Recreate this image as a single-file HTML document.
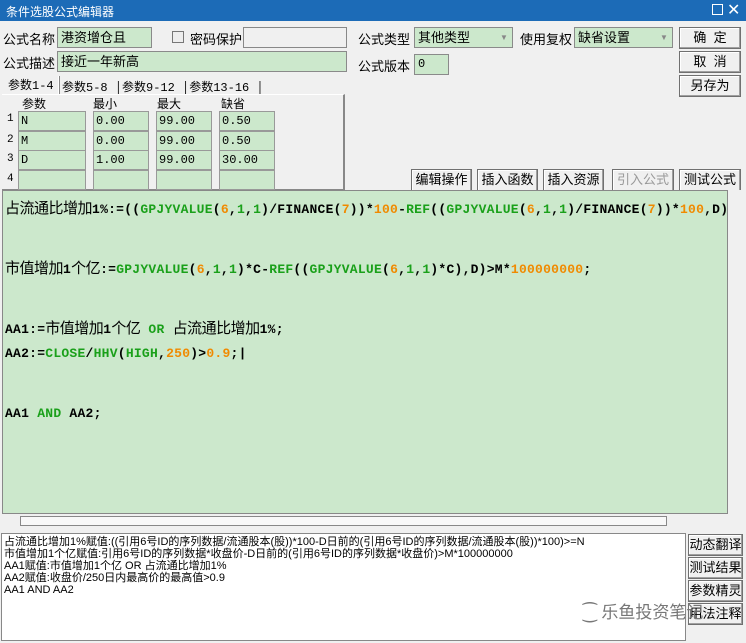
<!DOCTYPE html>
<html><head><meta charset="utf-8"><style>
*{margin:0;padding:0;box-sizing:border-box}
body{width:746px;height:643px;background:#f0f0f0;font-family:"Liberation Sans","Noto Sans CJK SC",sans-serif;font-size:13px;color:#000;position:relative;overflow:hidden}
.a{position:absolute;white-space:nowrap}
.t{position:absolute;top:0;left:0;width:746px;height:21px;background:#1c6bb7;color:#fff;font-size:12px;padding:3px 6px}
.in{position:absolute;background:#cce8cc;border:1px solid #8a8a8a;padding:1px 3px;font-size:13px;line-height:17px}
.btn{position:absolute;background:#f0f0f0;border:1px solid #707070;box-shadow:inset -1px -1px #a0a0a0,inset 1px 1px #fff;text-align:center;font-size:13px;line-height:20px}
.m{font-family:"Liberation Mono","Noto Sans CJK SC",monospace}
.code{position:absolute;left:2px;top:190px;width:726px;height:324px;background:#cce8cc;border:1px solid #888;overflow:hidden}
.code div{position:absolute;left:2px;font-family:"Liberation Mono","Noto Sans CJK SC",monospace;font-weight:bold;font-size:13px;white-space:nowrap;letter-spacing:0.25px}
.g{color:#1aa01a}.o{color:#f08a00}.c{font-weight:normal;font-size:15px;letter-spacing:-0.5px}
.cell{position:absolute;background:#cce8cc;border:1px solid #999;height:20px;font-family:"Liberation Mono",monospace;font-size:12px;padding:2px 2px}
</style></head><body>
<div class="t">条件选股公式编辑器</div>
<div class="a" style="left:712px;top:4px;width:11px;height:11px;border:1px solid #fff"></div>
<div class="a" style="left:727px;top:0;color:#fff;font-size:16px">✕</div>

<div class="a" style="left:3px;top:29px">公式名称</div>
<div class="in" style="left:57px;top:27px;width:95px;height:21px">港资增仓且</div>
<div class="a" style="left:172px;top:31px;width:12px;height:12px;border:1px solid #777;background:#eee"></div>
<div class="a" style="left:190px;top:29px">密码保护</div>
<div class="a" style="left:243px;top:27px;width:104px;height:21px;border:1px solid #888;background:#f0f0f0"></div>
<div class="a" style="left:3px;top:53px">公式描述</div>
<div class="in" style="left:57px;top:51px;width:290px;height:21px">接近一年新高</div>

<div class="a" style="left:358px;top:29px">公式类型</div>
<div class="in" style="left:414px;top:27px;width:99px;height:21px">其他类型</div>
<div class="a" style="left:496px;top:28px;width:16px;height:19px;color:#888;font-size:8px;padding-top:5px;text-align:center">▼</div>
<div class="a" style="left:520px;top:29px">使用复权</div>
<div class="in" style="left:574px;top:27px;width:99px;height:21px">缺省设置</div>
<div class="a" style="left:656px;top:28px;width:16px;height:19px;color:#888;font-size:8px;padding-top:5px;text-align:center">▼</div>
<div class="a" style="left:358px;top:56px">公式版本</div>
<div class="in m" style="left:414px;top:54px;width:35px;height:21px;font-size:12px">0</div>

<div class="btn" style="left:679px;top:27px;width:62px;height:22px">确 &nbsp;定</div>
<div class="btn" style="left:679px;top:51px;width:62px;height:22px">取 &nbsp;消</div>
<div class="btn" style="left:679px;top:75px;width:62px;height:22px">另存为</div>

<div class="a m" style="left:8px;top:76px;font-size:12px">参数1-4</div>
<div class="a" style="left:58px;top:76px;height:18px;border-left:1px solid #fff;border-right:1px solid #888"></div>
<div class="a m" style="left:62px;top:78px;font-size:12px">参数5-8 │参数9-12 │参数13-16 │</div>
<div class="a" style="left:2px;top:94px;width:343px;height:97px;border-right:2px solid #888;border-bottom:2px solid #888;border-top:1px solid #fff"></div>
<div class="a" style="left:22px;top:95px;font-size:12px">参数</div>
<div class="a" style="left:93px;top:95px;font-size:12px">最小</div>
<div class="a" style="left:157px;top:95px;font-size:12px">最大</div>
<div class="a" style="left:221px;top:95px;font-size:12px">缺省</div>
<div class="a m" style="left:7px;top:113px;font-size:11px">1</div>
<div class="a m" style="left:7px;top:134px;font-size:11px">2</div>
<div class="a m" style="left:7px;top:153px;font-size:11px">3</div>
<div class="a m" style="left:7px;top:173px;font-size:11px">4</div>
<div class="cell" style="left:18px;top:111px;width:68px">N</div><div class="cell" style="left:93px;top:111px;width:56px">0.00</div><div class="cell" style="left:156px;top:111px;width:56px">99.00</div><div class="cell" style="left:219px;top:111px;width:56px">0.50</div>
<div class="cell" style="left:18px;top:131px;width:68px">M</div><div class="cell" style="left:93px;top:131px;width:56px">0.00</div><div class="cell" style="left:156px;top:131px;width:56px">99.00</div><div class="cell" style="left:219px;top:131px;width:56px">0.50</div>
<div class="cell" style="left:18px;top:150px;width:68px">D</div><div class="cell" style="left:93px;top:150px;width:56px">1.00</div><div class="cell" style="left:156px;top:150px;width:56px">99.00</div><div class="cell" style="left:219px;top:150px;width:56px">30.00</div>
<div class="cell" style="left:18px;top:170px;width:68px"></div><div class="cell" style="left:93px;top:170px;width:56px"></div><div class="cell" style="left:156px;top:170px;width:56px"></div><div class="cell" style="left:219px;top:170px;width:56px"></div>

<div class="btn" style="left:411px;top:169px;width:61px;height:23px">编辑操作</div>
<div class="btn" style="left:477px;top:169px;width:61px;height:23px">插入函数</div>
<div class="btn" style="left:543px;top:169px;width:61px;height:23px">插入资源</div>
<div class="btn" style="left:612px;top:169px;width:62px;height:23px;color:#999">引入公式</div>
<div class="btn" style="left:679px;top:169px;width:62px;height:23px">测试公式</div>

<div class="code">
<div style="top:6px"><span class="c">占流通比增加</span>1%:=((<span class="g">GPJYVALUE</span>(<span class="o">6</span>,<span class="g">1</span>,<span class="g">1</span>)/FINANCE(<span class="o">7</span>))*<span class="o">100</span>-<span class="g">REF</span>((<span class="g">GPJYVALUE</span>(<span class="o">6</span>,<span class="g">1</span>,<span class="g">1</span>)/FINANCE(<span class="o">7</span>))*<span class="o">100</span>,D)</div>
<div style="top:66px"><span class="c">市值增加</span>1<span class="c">个亿</span>:=<span class="g">GPJYVALUE</span>(<span class="o">6</span>,<span class="g">1</span>,<span class="g">1</span>)*C-<span class="g">REF</span>((<span class="g">GPJYVALUE</span>(<span class="o">6</span>,<span class="g">1</span>,<span class="g">1</span>)*C),D)&gt;M*<span class="o">100000000</span>;</div>
<div style="top:126px">AA1:=<span class="c">市值增加</span>1<span class="c">个亿</span> <span class="g">OR</span> <span class="c">占流通比增加</span>1%;</div>
<div style="top:155px">AA2:=<span class="g">CLOSE</span>/<span class="g">HHV</span>(<span class="g">HIGH</span>,<span class="o">250</span>)&gt;<span class="o">0.9</span>;|</div>
<div style="top:215px">AA1 <span class="g">AND</span> AA2;</div>
</div>
<div class="a" style="left:728px;top:190px;width:16px;height:324px;background:#f0f0f0"></div>
<div class="a" style="left:20px;top:516px;width:647px;height:10px;border:1px solid #888;background:#f8f8f8"></div>

<div class="a" style="left:1px;top:533px;width:685px;height:108px;background:#fff;border:1px solid #888"></div>
<div class="a" style="left:4px;top:536px;font-size:11px;line-height:12px;font-family:'Liberation Sans','WenQuanYi Zen Hei',sans-serif">占流通比增加1%赋值:((引用6号ID的序列数据/流通股本(股))*100-D日前的(引用6号ID的序列数据/流通股本(股))*100)&gt;=N<br>市值增加1个亿赋值:引用6号ID的序列数据*收盘价-D日前的(引用6号ID的序列数据*收盘价)&gt;M*100000000<br>AA1赋值:市值增加1个亿 OR 占流通比增加1%<br>AA2赋值:收盘价/250日内最高价的最高值&gt;0.9<br>AA1 AND AA2</div>
<div class="btn" style="left:688px;top:534px;width:55px;height:22px">动态翻译</div>
<div class="btn" style="left:688px;top:557px;width:55px;height:22px">测试结果</div>
<div class="btn" style="left:688px;top:580px;width:55px;height:22px">参数精灵</div>
<div class="btn" style="left:688px;top:603px;width:55px;height:22px">用法注释</div>
<div class="a" style="left:583px;top:598px;font-size:17px;color:#777">⁐ 乐鱼投资笔记</div>
</body></html>
